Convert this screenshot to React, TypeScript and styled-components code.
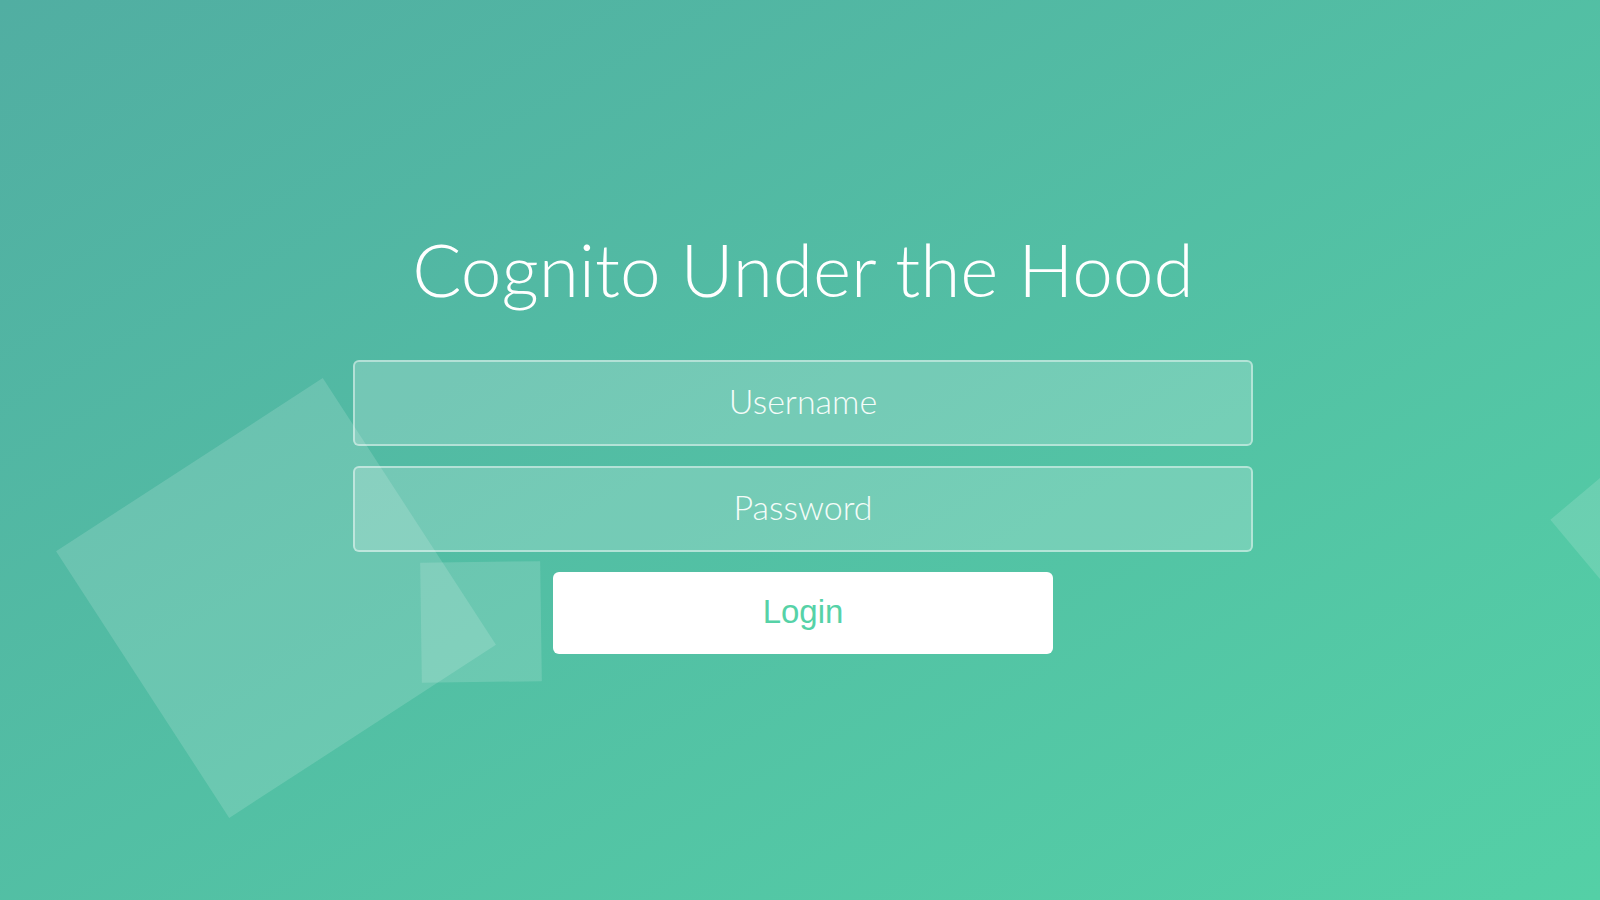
import React from "react";
import styled, { createGlobalStyle } from "styled-components";

const Global = createGlobalStyle`
  html, body { margin: 0; padding: 0; }
  body { font-family: Lato, "Liberation Sans", sans-serif; overflow: hidden; }
  * { box-sizing: border-box; }
`;

const Page = styled.div`
  position: relative;
  width: 100vw;
  height: 100vh;
  overflow: hidden;
  background: linear-gradient(to bottom right, #51aea2 0%, #54d0a6 100%);
`;

const Content = styled.div`
  position: relative;
  z-index: 2;
  display: flex;
  flex-direction: column;
  align-items: center;
  padding-top: 233px;
  padding-left: 6px;
`;

const Title = styled.h1`
  margin: 0 0 55px;
  font-family: Lato, "Open Sans", sans-serif;
  font-weight: 300;
  font-size: 73px;
  line-height: 72px;
  color: #ffffff;
  letter-spacing: 0;
`;

const Form = styled.form`
  display: flex;
  flex-direction: column;
  align-items: center;
  gap: 20px;
`;

const Field = styled.input`
  display: block;
  width: 900px;
  height: 86px;
  padding: 0 20px 6px;
  border: 2px solid rgba(255, 255, 255, 0.45);
  border-radius: 6px;
  background: rgba(255, 255, 255, 0.2);
  color: #ffffff;
  font-family: Lato, "Open Sans", sans-serif;
  font-weight: 300;
  font-size: 34px;
  text-align: center;
  outline: none;
  &::placeholder {
    color: #f4fcf9;
    opacity: 1;
  }
`;

const Button = styled.button`
  display: block;
  width: 500px;
  height: 82px;
  padding: 0 0 2px;
  border: 0;
  border-radius: 6px;
  background: #ffffff;
  color: #56d2a7;
  font-family: "Liberation Sans", Arial, sans-serif;
  font-size: 33px;
  font-weight: 400;
  cursor: pointer;
`;

const Square = styled.div<{ $size: number }>`
  position: absolute;
  z-index: 1;
  width: ${(p) => p.$size}px;
  height: ${(p) => p.$size}px;
  background: rgba(255, 255, 255, 0.15);
`;

const BigSquare = styled(Square)`
  left: 117px;
  top: 439px;
  transform: rotate(-33deg);
`;

const SmallSquare = styled(Square)`
  left: 421px;
  top: 562px;
  transform: rotate(-0.8deg);
`;

const EdgeSquare = styled(Square)`
  left: 1581px;
  top: 454px;
  transform: rotate(-40deg);
  background: rgba(255, 255, 255, 0.14);
`;

export default function App() {
  return (
    <>
      <Global />
      <Page>
        <BigSquare $size={318} />
        <SmallSquare $size={120} />
        <EdgeSquare $size={150} />
        <Content>
          <Title>Cognito Under the Hood</Title>
          <Form onSubmit={(e) => e.preventDefault()}>
            <Field type="text" placeholder="Username" />
            <Field type="password" placeholder="Password" />
            <Button type="submit">Login</Button>
          </Form>
        </Content>
      </Page>
    </>
  );
}
